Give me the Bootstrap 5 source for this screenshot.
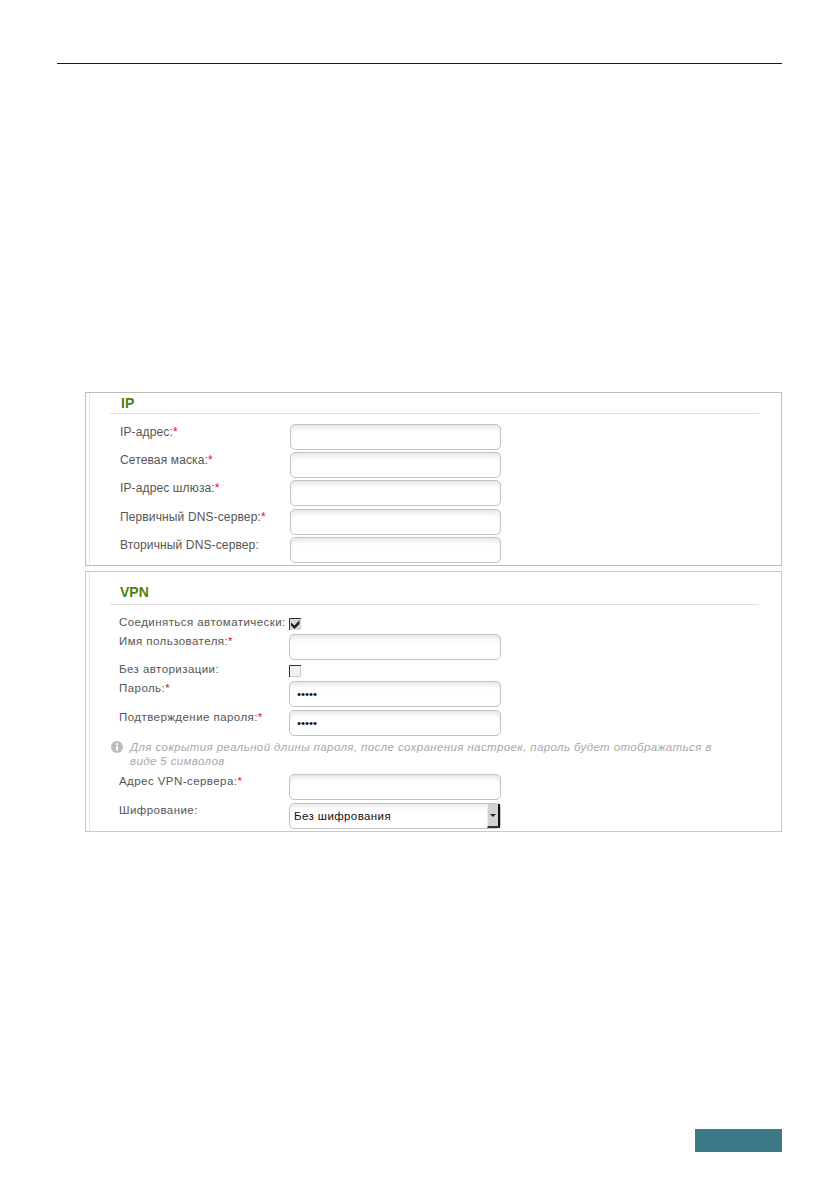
<!DOCTYPE html>
<html lang="ru">
<head>
  <meta charset="UTF-8" />
  <meta name="viewport" content="width=device-width, initial-scale=1.0"/>
  <title>IP VPN</title>
  <link href="https://cdn.jsdelivr.net/npm/bootstrap@5.3.3/dist/css/bootstrap.min.css" rel="stylesheet" />
  <style>
    html, body { height: 1190px; overflow: hidden; background: #fff; }
    body { font-family: "Liberation Sans", Arial, sans-serif; }
    .sheet { width: 840px; height: 1190px; padding: 63px 58px 0 57px; }
    .top-rule { height: 1px; background: #1a1a1a; margin-bottom: 328px; }
    .panel-box { margin-left: 28px; border: 1px solid #bdbdbd; padding-left: 3px; }
    .panel-ip { height: 174px; margin-bottom: 5px; }
    .panel-vpn { height: 261px; border-color: #c8c8c8; }
    .panel-in { border-left: 1px solid #e6e6e6; height: 100%; padding-left: 20px; padding-right: 22px; }
    .sec-title { font-weight: 700; font-size: 14px; color: #4f8010; border-bottom: 1px solid #dedede; padding-left: 11px; line-height: 16px; }
    .panel-ip .sec-title { height: 21px; padding-top: 2px; margin-bottom: 10px; }
    .panel-vpn .sec-title { height: 33px; padding-top: 12px; padding-left: 10px; margin-bottom: 13px; }
    .fld { display: flex; align-items: flex-start; }
    .rh-16 { height: 16px; }
    .rh-26 { height: 26px; }
    .rh-28 { height: 28px; }
    .rh-29 { height: 29px; }
    .rh-30 { height: 30px; }
    .rh-31 { height: 31px; }
    .fld-lbl { font-size: 11.5px; line-height: 14px; color: #555; white-space: nowrap; }
    .fld-up { margin-top: -3px; }
    .panel-ip .fld-lbl { width: 180px; padding-left: 10px; padding-top: 1px; font-size: 12px; letter-spacing: .13px; }
    .panel-vpn .fld-lbl { width: 179px; padding-left: 9px; letter-spacing: .44px; }
    .req { color: #e0103c; }
    .form-control.txt-in { width: 212px; height: 26px; padding: 0 7px; font-size: 11.5px; color: #111; -webkit-text-fill-color: #111; border: 1px solid #c4c4c4; border-radius: 5px; box-shadow: inset 0 5px 6px -3px rgba(0,0,0,.13); }
    .panel-ip .form-control.txt-in { width: 211px; }
    .chk-box { display: block; width: 12px; height: 12px; }
    .sel-box { width: 212px; height: 26px; border: 1px solid #c4c4c4; border-radius: 5px; box-shadow: inset 0 5px 6px -3px rgba(0,0,0,.1); font-size: 11.5px; letter-spacing: .4px; color: #111; padding-left: 4px; line-height: 24px; }
    .sel-btn { width: 13px; height: 24px; background: #d2d2d2; border-left: 1px solid #eee; border-right: 2px solid #111; border-bottom: 2px solid #333; }
    .sel-arrow { width: 0; height: 0; border-left: 3px solid transparent; border-right: 3px solid transparent; border-top: 3px solid #222; }
    .hint-row { display: flex; font-size: 11.5px; line-height: 14px; font-style: italic; color: #a8a8a8; letter-spacing: .39px; width: 610px; height: 34px; }
    .hint-ico { flex: none; width: 12px; height: 12px; margin: 1px 7px 0 1px; }
    .page-tab { width: 87px; height: 23px; background: #3d7a87; margin-left: auto; margin-top: 297px; }
  </style>
</head>
<body>
<div class="sheet">
  <div class="top-rule"></div>

  <div class="panel-box panel-ip">
    <div class="panel-in">
      <div class="sec-title">IP</div>
      <div class="fld rh-28"><div class="fld-lbl">IP-адрес:<span class="req">*</span></div><input type="text" class="form-control txt-in"></div>
      <div class="fld rh-28"><div class="fld-lbl">Сетевая маска:<span class="req">*</span></div><input type="text" class="form-control txt-in"></div>
      <div class="fld rh-29"><div class="fld-lbl">IP-адрес шлюза:<span class="req">*</span></div><input type="text" class="form-control txt-in"></div>
      <div class="fld rh-28"><div class="fld-lbl">Первичный DNS-сервер:<span class="req">*</span></div><input type="text" class="form-control txt-in"></div>
      <div class="fld rh-26"><div class="fld-lbl">Вторичный DNS-сервер:</div><input type="text" class="form-control txt-in"></div>
    </div>
  </div>

  <div class="panel-box panel-vpn">
    <div class="panel-in">
      <div class="sec-title">VPN</div>
      <div class="fld rh-16"><div class="fld-lbl fld-up">Соединяться автоматически:</div>
        <svg class="chk-box" viewBox="0 0 12 12"><rect width="12" height="12" fill="#d8d8d8"/><path d="M.5 12V.5H12" fill="none" stroke="#333"/><path d="M2 4.5l3.5 3L10.5 2v4L5.5 11 2 7.5z" fill="#222"/></svg>
      </div>
      <div class="fld rh-31"><div class="fld-lbl">Имя пользователя:<span class="req">*</span></div><input type="text" class="form-control txt-in"></div>
      <div class="fld rh-16"><div class="fld-lbl fld-up">Без авторизации:</div>
        <svg class="chk-box" viewBox="0 0 12 12"><rect width="12" height="12" fill="#f2f2f2"/><path d="M.5 12V.5H12" fill="none" stroke="#333"/><path d="M11.5 1v10.5H1" fill="none" stroke="#ccc"/></svg>
      </div>
      <div class="fld rh-29"><div class="fld-lbl">Пароль:<span class="req">*</span></div><input type="password" class="form-control txt-in" value="12345" autocomplete="off"></div>
      <div class="fld rh-30"><div class="fld-lbl">Подтверждение пароля:<span class="req">*</span></div><input type="password" class="form-control txt-in" value="12345" autocomplete="off"></div>
      <div class="hint-row">
        <svg class="hint-ico" viewBox="0 0 12 12"><circle cx="6" cy="6" r="6" fill="#bdbdbd"/><rect x="5" y="5" width="2" height="4.5" fill="#fff"/><rect x="5" y="2.2" width="2" height="1.8" fill="#fff"/></svg>
        <div>Для сокрытия реальной длины пароля, после сохранения настроек, пароль будет отображаться в виде 5 символов</div>
      </div>
      <div class="fld rh-29"><div class="fld-lbl">Адрес VPN-сервера:<span class="req">*</span></div><input type="text" class="form-control txt-in"></div>
      <div class="fld"><div class="fld-lbl">Шифрование:</div>
        <div class="sel-box d-flex justify-content-between"><span>Без шифрования</span><span class="sel-btn d-flex align-items-center justify-content-center"><span class="sel-arrow"></span></span></div>
      </div>
    </div>
  </div>

  <div class="page-tab"></div>
</div>
<script src="https://cdn.jsdelivr.net/npm/bootstrap@5.3.3/dist/js/bootstrap.bundle.min.js"></script>
</body>
</html>
